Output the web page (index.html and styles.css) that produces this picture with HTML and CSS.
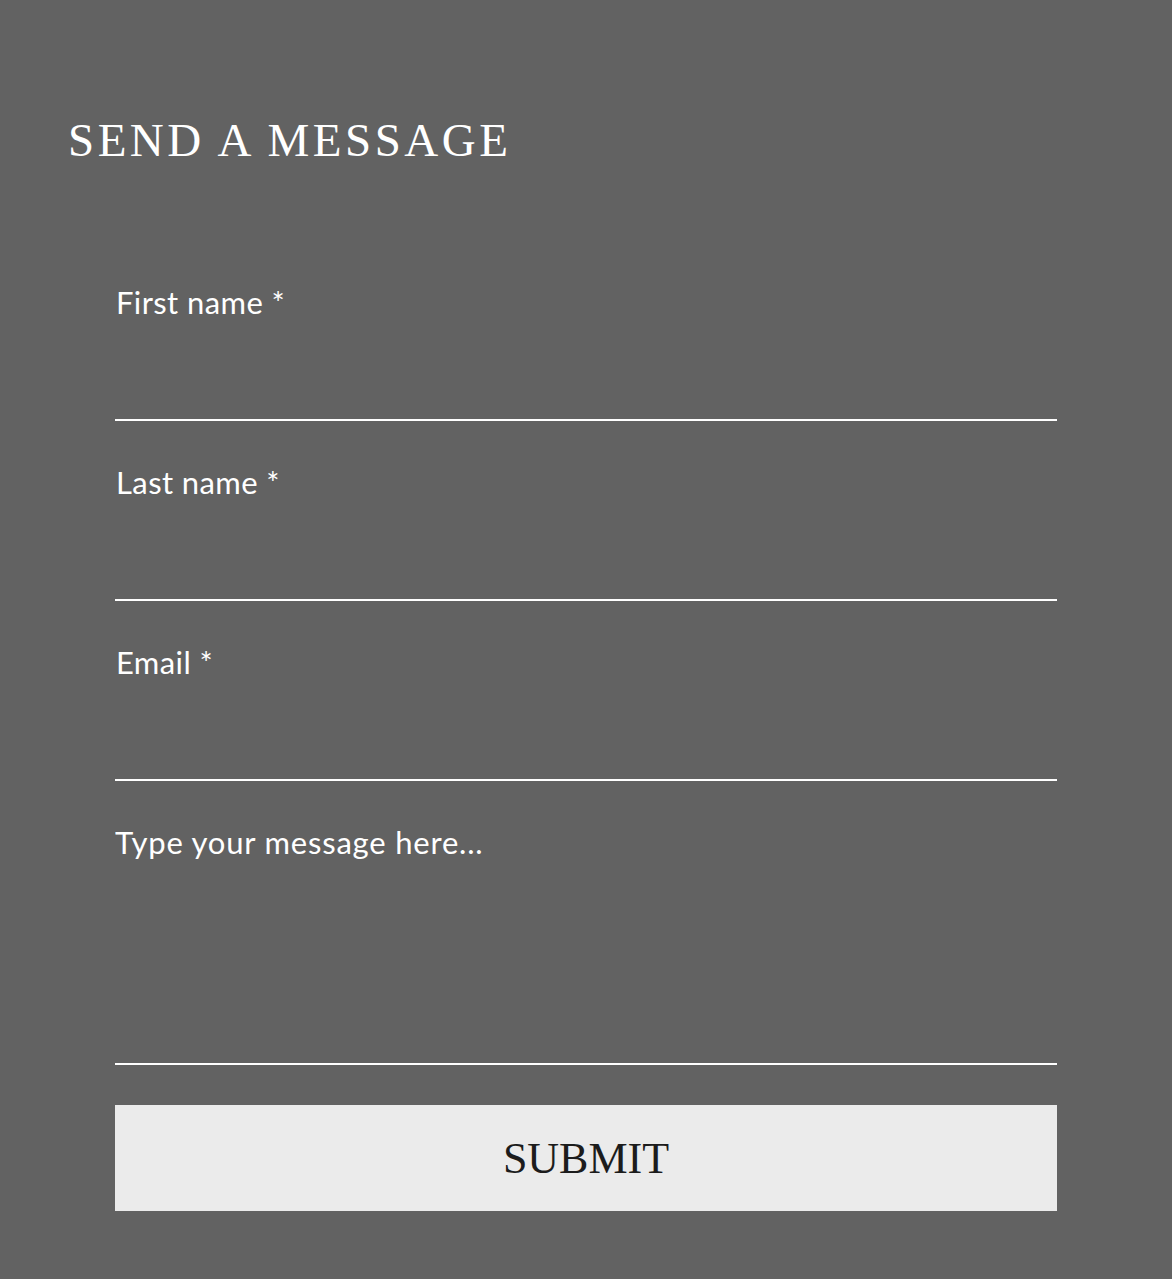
FILE: index.html
```html
<!DOCTYPE html>
<html lang="en">
<head>
<meta charset="UTF-8">
<meta name="viewport" content="width=device-width, initial-scale=1.0">
<title>Send a Message</title>
<link rel="stylesheet" href="styles.css">
</head>
<body>

<div class="contact">
  <h2 class="contact-title">SEND A MESSAGE</h2>

  <form class="contact-form" onsubmit="return false;">
    <div class="field">
      <label class="field-label" for="first-name">First name *</label>
      <input class="field-input" id="first-name" type="text">
    </div>
    <div class="field">
      <label class="field-label" for="last-name">Last name *</label>
      <input class="field-input" id="last-name" type="text">
    </div>
    <div class="field">
      <label class="field-label" for="email">Email *</label>
      <input class="field-input" id="email" type="email">
    </div>
    <div class="field field-message">
      <textarea class="field-textarea" placeholder="Type your message here..."></textarea>
    </div>
    <button class="submit-button" type="submit">SUBMIT</button>
  </form>
</div>

</body>
</html>
```

FILE: styles.css
```css
body {
  margin: 0;
  padding: 0;
  background-color: #626262;
  font-family: Lato, 'Noto Sans', sans-serif;
}
.contact {
  min-height: 100vh;
  box-sizing: border-box;
  padding: 110px 0 0 0;
}
.contact-title {
  margin: 0 0 0 68px;
  font-family: 'Liberation Serif', serif;
  font-weight: normal;
  font-size: 47px;
  line-height: 60px;
  letter-spacing: 3.5px;
  color: #ffffff;
}
.contact-form {
  display: flex;
  flex-direction: column;
  width: 942px;
  margin: 112px 0 0 115px;
}
.field {
  display: flex;
  flex-direction: column;
  border-bottom: 2px solid #ffffff;
  margin-bottom: 41px;
}
.field-label {
  font-size: 31px;
  line-height: 41px;
  letter-spacing: 0.4px;
  color: #ffffff;
  margin-left: 1px;
}
.field-input {
  height: 96px;
  background: transparent;
  border: none;
  outline: none;
  color: #ffffff;
  font-family: inherit;
  font-size: 30px;
  padding: 0;
}
.field-message {
  margin-bottom: 40px;
}
.field-textarea {
  height: 241px;
  background: transparent;
  border: none;
  outline: none;
  resize: none;
  padding: 0;
  color: #ffffff;
  font-family: inherit;
  font-size: 31px;
  line-height: 40px;
  letter-spacing: 0.8px;
}
.field-textarea::placeholder {
  color: #ffffff;
  opacity: 1;
}
.submit-button {
  height: 106px;
  background-color: #ebebeb;
  border: none;
  color: #1c1c1c;
  font-family: 'Liberation Serif', serif;
  font-size: 44px;
  cursor: pointer;
}
```
